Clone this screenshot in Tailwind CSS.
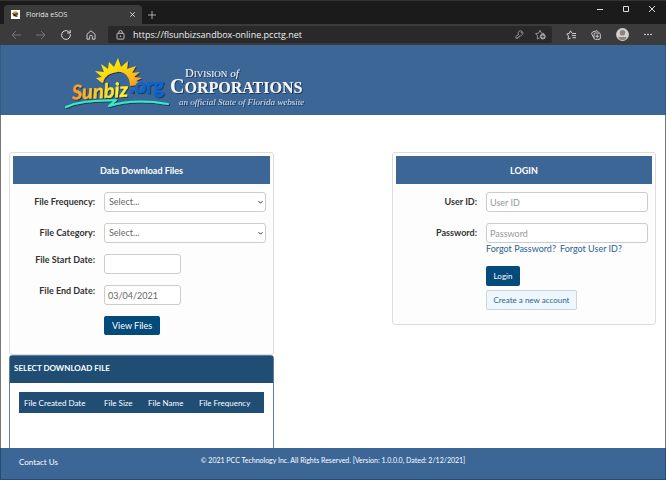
<!DOCTYPE html>
<html lang="en">
<head>
<meta charset="utf-8">
<title>Florida eSOS</title>
<script src="https://cdn.jsdelivr.net/npm/@tailwindcss/browser@4"></script>
</head>
<body class="flex h-screen flex-col overflow-hidden bg-white font-[Lato,sans-serif] text-[9px] leading-3 text-[#333]">

<div class="flex h-6 shrink-0 items-end justify-between border-t border-[#333] bg-[#1b1b1b] font-['Open_Sans',sans-serif] text-[#e4e4e4]">
  <div class="flex h-full items-end">
    <div class="ml-1 flex h-[19px] w-[138px] items-center rounded-t-sm bg-[#3b3b3b] pl-[7px] pr-[6px]">
      <svg class="size-[9px]" viewBox="0 0 9 9"><path fill="#fff" d="M0 0h9v9H0z"/><circle cx="4.5" cy="4" r="2.8" fill="#e99a1c"/><path d="M1 3l3 1 3 3-4-1z" fill="#222"/><path d="M4 3h3v2H5z" fill="#2a65a5"/></svg>
      <span class="ml-[6px] flex-1 text-[7px]">Florida eSOS</span>
      <button aria-label="Close tab" class="p-px"><svg class="size-[5px]" viewBox="0 0 5 5" stroke="#e4e4e4" stroke-width=".9"><path d="M.3.3l4.4 4.4M4.7.3L.3 4.7"/></svg></button>
    </div>
    <button aria-label="New tab" class="mb-[5px] ml-[6px]"><svg class="size-2" viewBox="0 0 8 8" stroke="#bbb" stroke-width=".9"><path d="M4 0v8M0 4h8"/></svg></button>
  </div>
  <div class="flex h-4 items-center gap-5 self-start pr-[11px]">
    <button aria-label="Minimize"><svg class="size-[6px]" viewBox="0 0 6 6" stroke="#ddd"><path d="M0 3.5h6"/></svg></button>
    <button aria-label="Maximize"><svg class="size-[6px]" viewBox="0 0 6 6" stroke="#ddd" fill="none"><path d="M.5.5h5v5h-5z"/></svg></button>
    <button aria-label="Close"><svg class="size-[6px]" viewBox="0 0 6 6" stroke="#ddd"><path d="M0 0l6 6M6 0L0 6"/></svg></button>
  </div>
</div>

<div class="flex h-[21px] shrink-0 items-center bg-[#3b3b3b] px-[11px] font-['Open_Sans',sans-serif]">
  <div class="flex items-center gap-[15px]">
    <button aria-label="Back"><svg class="size-[10px]" viewBox="0 0 10 10" fill="none" stroke="#777"><path d="M10 5H1M5 1L1 5l4 4"/></svg></button>
    <button aria-label="Forward"><svg class="size-[10px]" viewBox="0 0 10 10" fill="none" stroke="#777"><path d="M0 5h9M5 1l4 4-4 4"/></svg></button>
    <button aria-label="Refresh"><svg class="size-[10px]" viewBox="0 0 10 10" fill="none" stroke="#ddd"><path d="M9.3 4.2A4.4 4.4 0 1 1 7.6 1.5L9 2.8M9.2 0v3H6.2"/></svg></button>
    <button aria-label="Home"><svg class="size-[10px]" viewBox="0 0 10 10" fill="none" stroke="#ccc"><path d="M1 4.2L5 .8l4 3.4v5H6.4V6.6a1.4 1.4 0 0 0-2.8 0v2.6H1z"/></svg></button>
  </div>
  <div class="ml-3 flex h-[17px] flex-1 items-center rounded-xs bg-[#292929] pl-2 pr-[6px]">
    <svg class="h-[10px] w-[9px]" viewBox="0 0 9 10" fill="none" stroke="#ccc" stroke-width=".9"><rect x="1" y="3.3" width="7" height="5.8" rx=".8"/><path d="M2.8 3.3V2.2a1.7 1.7 0 0 1 3.4 0v1.1"/><circle cx="4.5" cy="6.2" r=".4"/></svg>
    <input aria-label="Address" value="https://flsunbizsandbox-online.pcctg.net" class="ml-2 min-w-0 flex-1 bg-transparent text-[9px] text-[#f0f0f0] outline-none">
    <svg class="size-[9px]" viewBox="0 0 9 9" fill="none" stroke="#aaa" stroke-width=".8"><path d="M4 5.1A2.4 2.4 0 1 1 5.7 5.6L5 6.2H4v1H3v1H.8V6.6L3.7 4.2"/><circle cx="6.4" cy="2.6" r=".4"/></svg>
    <svg class="ml-[11px] size-[11px]" viewBox="0 0 11 11" fill="none" stroke="#aaa" stroke-width=".8"><path d="M4.5 9L2.2 10l.5-3L.6 4.6l2.9-.4L5 1.2l1.4 3 2.8.3"/><circle cx="7.8" cy="7.6" r="2.5" fill="#aaa"/><path stroke="#292929" d="M7.8 6v3.2M6.2 7.6h3.2"/></svg>
  </div>
  <div class="ml-[14px] flex items-center gap-[15px]">
    <svg class="size-[10px]" viewBox="0 0 10 10" fill="none" stroke="#ddd" stroke-width=".9"><path d="M6 3.2L4.5.8 3.3 3.4.7 4l1.8 2-.5 3.2L4.6 8M6 3.5h4M6 5.6h4M6.5 7.7H10"/></svg>
    <svg class="size-[10px]" viewBox="0 0 10 10" fill="none" stroke="#ddd" stroke-width=".9"><path d="M2.5 7.5L.6 3.6 1.5 2 6 .7l1.5 1.5"/><rect x="3" y="3" width="6.3" height="6.3" rx="1.3"/><path d="M6.2 4.4v3.5M4.4 6.2h3.5"/></svg>
    <svg class="size-[13px]" viewBox="0 0 13 13"><circle cx="6.5" cy="6.5" r="6.4" fill="#d4d0cc"/><circle cx="6.5" cy="4.8" r="2.8" fill="#8a8580"/><path fill="#8a8580" d="M2.6 9h7.8a2 2 0 0 1-.9 2.2 6 6 0 0 1-6 0A2 2 0 0 1 2.6 9z"/></svg>
    <svg class="mr-[3px] h-[3px] w-2" viewBox="0 0 8 3" fill="#eee"><circle cx="1" cy="1.5" r=".8"/><circle cx="4" cy="1.5" r=".8"/><circle cx="7" cy="1.5" r=".8"/></svg>
  </div>
</div>

<header class="flex h-[70px] shrink-0 items-end border-x border-[#35597f] bg-[#3c6696] pb-px pl-[63px]">
  <a href="#" aria-label="Sunbiz.org, Division of Corporations" class="block">
    <svg class="h-[56px] w-[244px]" viewBox="0 0 244 56">
      <defs>
        <linearGradient id="sun" x1="0" x2="1" y1="0" y2="1"><stop offset=".2" stop-color="#ffee00"/><stop offset=".65" stop-color="#ffc413"/><stop offset="1" stop-color="#f58a1f"/></linearGradient>
        <linearGradient id="word" x1="0" x2="1"><stop stop-color="#f9912a"/><stop offset=".35" stop-color="#ffc21a"/><stop offset=".8" stop-color="#fff12a"/></linearGradient>
        <filter id="shade" x="-10%" y="-20%" width="125%" height="150%"><feDropShadow dx="1" dy="1" stdDeviation=".6" flood-color="#14283f" flood-opacity=".75"/></filter>
      </defs>
      <g filter="url(#shade)">
        <path fill="url(#sun)" d="M37 24L32 20l6-1-7-6 9 1-3-8 7 5 1-7 5 5 4-9 3 9 7-6-1 8 9-3-4 7 8-1-6 5 8 1-6 3 7 3-13 2C66 18 60 13 53 14S40 18 39 25z"/>
        <text transform="rotate(-3 38 36)" x="8" y="40" fill="url(#word)" stroke="url(#word)" stroke-width=".3" font-family="Lato, sans-serif" font-style="italic" font-weight="700" font-size="20">Sunbiz</text>
        <text x="66" y="35" fill="#0866d2" stroke="#0866d2" stroke-width=".4" font-family="Lato, sans-serif" font-weight="700" font-size="20">.org</text>
        <path d="M2 49C18 42 35 43 52 42L45 48C65 42 86 43 104 46" fill="none" stroke="#32edc5" stroke-width="2" stroke-linecap="round" stroke-linejoin="round"/>
      </g>
      <g filter="url(#shade)" fill="#f5f6f8" font-family="'Liberation Serif', serif">
        <text x="121" y="19" font-size="12">D<tspan font-size="9">IVISION</tspan><tspan font-style="italic" font-size="11" dx="3">of</tspan></text>
        <text x="106" y="35" font-size="20" font-weight="700">C<tspan font-size="16">ORPORATIONS</tspan></text>
        <text x="115" y="47" font-size="9" font-style="italic" fill="#cfdbea">an official State of Florida website</text>
      </g>
    </svg>
  </a>
</header>

<main class="flex min-h-0 flex-1 items-start justify-between overflow-hidden border-x border-[#777] pl-2 pr-[9px] pt-[37px]">
  <div class="w-[265px]">
    <form class="h-[203px] rounded-[3px] border border-[#ddd] bg-[#fdfdfd] p-[3px]">
      <h2 class="flex h-7 items-center justify-center bg-[#3c6696] pt-px font-bold text-white">Data Download Files</h2>
      <div class="mt-2 grid grid-cols-[82px_1fr] gap-x-[9px] gap-y-[11px] pr-1">
        <label for="freq" class="pt-1 text-right font-bold">File Frequency:</label>
        <div class="relative">
          <select id="freq" class="h-5 w-full appearance-none rounded-[3px] border border-[#ccc] bg-white px-1 text-[9px] text-[#666]"><option>Select...</option></select>
          <svg class="pointer-events-none absolute right-[3px] top-2 size-[5px]" viewBox="0 0 5 5" fill="none" stroke="#333"><path d="M.5 1.2l2 2 2-2"/></svg>
        </div>
        <label for="cat" class="pt-1 text-right font-bold">File Category:</label>
        <div class="relative">
          <select id="cat" class="h-5 w-full appearance-none rounded-[3px] border border-[#ccc] bg-white px-1 text-[9px] text-[#666]"><option>Select...</option></select>
          <svg class="pointer-events-none absolute right-[3px] top-2 size-[5px]" viewBox="0 0 5 5" fill="none" stroke="#333"><path d="M.5 1.2l2 2 2-2"/></svg>
        </div>
        <label for="start" class="text-right font-bold">File Start Date:</label>
        <input id="start" class="h-5 w-[77px] rounded-[3px] border border-[#ccc] bg-white px-[3px] text-[9px] text-[#666]">
        <label for="end" class="text-right font-bold">File End Date:</label>
        <input id="end" value="03/04/2021" class="h-5 w-[77px] rounded-[3px] border border-[#ccc] bg-white px-[3px] text-[9px] text-[#666]">
        <button type="button" class="col-start-2 h-[19px] w-14 rounded-xs bg-[#044a7b] text-white">View Files</button>
      </div>
    </form>
    <section class="h-[150px] rounded-t-[3px] border border-[#5f7fa0]">
      <h2 class="flex h-[27px] items-center bg-[#204d74] px-1 pb-[3px] text-[8px] font-bold text-white">SELECT DOWNLOAD FILE</h2>
      <div class="px-[9px] pt-[9px]">
        <table class="w-full table-fixed bg-[#204d74] text-left text-[8px] text-white">
          <thead><tr class="h-[21px]">
            <th class="w-[85px] pl-[5px] font-normal">File Created Date</th>
            <th class="w-11 font-normal">File Size</th>
            <th class="w-[51px] font-normal">File Name</th>
            <th class="font-normal">File Frequency</th>
          </tr></thead>
        </table>
      </div>
    </section>
  </div>

  <form class="h-[173px] w-[264px] rounded-[3px] border border-[#ddd] bg-[#fdfdfd] p-[3px]">
    <h2 class="flex h-7 items-center justify-center bg-[#3c6696] pt-px font-bold text-white">LOGIN</h2>
    <div class="mt-2 grid grid-cols-[81px_1fr] gap-x-[9px] gap-y-[11px] pr-1">
      <label for="user" class="pt-1 text-right font-bold">User ID:</label>
      <input id="user" placeholder="User ID" class="h-5 w-full rounded-[3px] border border-[#ccc] bg-white px-[3px] text-[9px] placeholder:text-[#999]">
      <label for="pass" class="pt-1 text-right font-bold">Password:</label>
      <div>
        <input id="pass" type="password" placeholder="Password" class="block h-5 w-full rounded-[3px] border border-[#ccc] bg-white px-[3px] text-[9px] placeholder:text-[#999]">
        <div class="flex gap-1 text-[#2d6290]"><a href="#">Forgot Password?</a><a href="#">Forgot User ID?</a></div>
        <button type="button" class="mt-[11px] block h-5 w-[34px] rounded-xs bg-[#044a7b] text-[8px] text-white">Login</button>
        <button type="button" class="mt-1 block h-5 w-[91px] rounded-xs border border-[#ccd5dd] bg-[#eff7fe] text-[8px] text-[#2d6290]">Create a new account</button>
      </div>
    </div>
  </form>
</main>

<footer class="grid h-8 shrink-0 grid-cols-[1fr_auto_1fr] border-x border-b border-[#294a70] bg-[#3c6696] pl-[18px] text-[8px] text-white">
  <a href="#" class="pt-2">Contact Us</a>
  <p class="pr-[18px] pt-[6px] text-[7px]">© 2021 PCC Technology Inc. All Rights Reserved. [Version: 1.0.0.0, Dated: 2/12/2021]</p>
</footer>
</body>
</html>
